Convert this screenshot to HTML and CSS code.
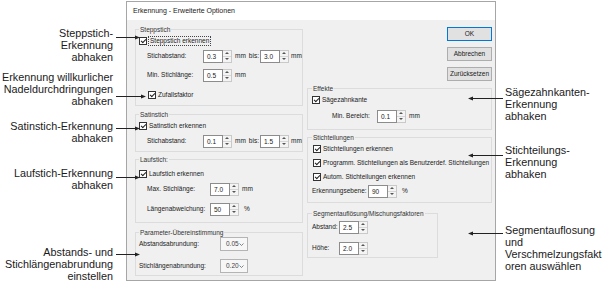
FILE: index.html
```html
<!DOCTYPE html>
<html lang="de">
<head>
    <meta charset="UTF-8">
    <meta name="viewport" content="width=device-width, initial-scale=1.0">
    <title>Erkennung - Erweiterte Optionen</title>
    <link rel="stylesheet" href="styles.css">
</head>
<body>
<div class="page">
    <div class="notes notes-left">
        <p class="note note-stepp">Steppstich-<br>Erkennung<br>abhaken</p>
        <p class="note note-zufall">Erkennung willkurlicher<br>Nadeldurchdringungen<br>abhaken</p>
        <p class="note note-satin">Satinstich-Erkennung<br>abhaken</p>
        <p class="note note-lauf">Laufstich-Erkennung<br>abhaken</p>
        <p class="note note-param">Abstands- und<br>Stichlängenabrundung<br>einstellen</p>
    </div>

    <div class="dialog">
        <div class="titlebar">Erkennung - Erweiterte Optionen</div>
        <div class="dialog-body">
            <div class="col col-left">
                <fieldset class="group group-stepp">
                    <legend>Steppstich</legend>
                    <div class="row"><span class="check"></span><span class="focus">Steppstich erkennen</span></div>
                    <div class="row sp1">
                        <span class="lbl">Stichabstand:</span>
                        <span class="spin"><span class="field">0.3</span><span class="arrows"><i class="up"></i><i class="down"></i></span></span>
                        <span class="unit">mm</span>
                        <span class="bis">bis:</span>
                        <span class="spin"><span class="field">3.0</span><span class="arrows"><i class="up"></i><i class="down"></i></span></span>
                        <span class="unit unit-end">mm</span>
                    </div>
                    <div class="row sp5">
                        <span class="lbl">Min. Stichlänge:</span>
                        <span class="spin"><span class="field">0.5</span><span class="arrows"><i class="up"></i><i class="down"></i></span></span>
                        <span class="unit">mm</span>
                    </div>
                    <div class="row sp6 indent"><span class="check"></span>Zufallsfaktor</div>
                </fieldset>

                <fieldset class="group group-satin">
                    <legend>Satinstich</legend>
                    <div class="row"><span class="check"></span>Satinstich erkennen</div>
                    <div class="row sp1">
                        <span class="lbl">Stichabstand:</span>
                        <span class="spin"><span class="field">0.1</span><span class="arrows"><i class="up"></i><i class="down"></i></span></span>
                        <span class="unit">mm</span>
                        <span class="bis">bis:</span>
                        <span class="spin"><span class="field">1.5</span><span class="arrows"><i class="up"></i><i class="down"></i></span></span>
                        <span class="unit unit-end">mm</span>
                    </div>
                </fieldset>

                <fieldset class="group group-lauf">
                    <legend>Laufstich:</legend>
                    <div class="row sp3"><span class="check"></span>Laufstich erkennen</div>
                    <div class="row sp1">
                        <span class="lbl">Max. Stichlänge:</span>
                        <span class="spin"><span class="field">7.0</span><span class="arrows"><i class="up"></i><i class="down"></i></span></span>
                        <span class="unit">mm</span>
                    </div>
                    <div class="row sp6">
                        <span class="lbl">Längenabweichung:</span>
                        <span class="spin"><span class="field">50</span><span class="arrows"><i class="up"></i><i class="down"></i></span></span>
                        <span class="unit unit-pct">%</span>
                    </div>
                </fieldset>

                <fieldset class="group group-param">
                    <legend>Parameter-Übereinstimmung</legend>
                    <div class="row">
                        <span class="lbl">Abstandsabrundung:</span>
                        <span class="combo">0.05<svg width="5" height="3" viewBox="0 0 5 3"><polyline points="0.5,0.5 2.5,2.5 4.5,0.5" fill="none" stroke="#666" stroke-width="0.8"/></svg></span>
                    </div>
                    <div class="row sp8">
                        <span class="lbl">Stichlängenabrundung:</span>
                        <span class="combo">0.20<svg width="5" height="3" viewBox="0 0 5 3"><polyline points="0.5,0.5 2.5,2.5 4.5,0.5" fill="none" stroke="#666" stroke-width="0.8"/></svg></span>
                    </div>
                </fieldset>
            </div>

            <div class="col col-right">
                <div class="buttons">
                    <span class="btn btn-default">OK</span>
                    <span class="btn">Abbrechen</span>
                    <span class="btn">Zurücksetzen</span>
                </div>

                <fieldset class="group group-effekte">
                    <legend>Effekte</legend>
                    <div class="row"><span class="check"></span>Sägezahnkante</div>
                    <div class="row sp2">
                        <span class="lbl">Min. Bereich:</span>
                        <span class="spin"><span class="field">0.1</span><span class="arrows"><i class="up"></i><i class="down"></i></span></span>
                        <span class="unit">mm</span>
                    </div>
                </fieldset>

                <fieldset class="group group-teil">
                    <legend>Stichteilungen</legend>
                    <div class="row"><span class="check"></span>Stichteilungen erkennen</div>
                    <div class="row"><span class="check"></span>Programm. Stichteilungen als Benutzerdef. Stichteilungen</div>
                    <div class="row"><span class="check"></span>Autom. Stichteilungen erkennen</div>
                    <div class="row">
                        <span class="lbl">Erkennungsebene:</span>
                        <span class="spin"><span class="field">90</span><span class="arrows"><i class="up"></i><i class="down"></i></span></span>
                        <span class="unit unit-pct">%</span>
                    </div>
                </fieldset>

                <fieldset class="group group-segment">
                    <legend>Segmentauflösung/Mischungsfaktoren</legend>
                    <div class="row sp2">
                        <span class="lbl">Abstand:</span>
                        <span class="spin"><span class="field">2.5</span><span class="arrows"><i class="up"></i><i class="down"></i></span></span>
                    </div>
                    <div class="row sp7">
                        <span class="lbl">Höhe:</span>
                        <span class="spin"><span class="field">2.0</span><span class="arrows"><i class="up"></i><i class="down"></i></span></span>
                    </div>
                </fieldset>
            </div>
        </div>
    </div>

    <div class="notes notes-right">
        <p class="note note-saege">Sägezahnkanten-<br>Erkennung<br>abhaken</p>
        <p class="note note-teil">Stichteilungs-<br>Erkennung<br>abhaken</p>
        <p class="note note-segment">Segmentauflosung<br>und<br>Verschmelzungsfakt<br>oren auswählen</p>
    </div>

    <!-- Hinweislinien -->
    <svg class="leaders" width="603" height="286" viewBox="0 0 603 286">
        <g stroke="#222" stroke-width="1">
            <line x1="116" y1="37.5" x2="136" y2="37.5"/>
            <line x1="116" y1="96.5" x2="142" y2="96.5"/>
            <line x1="116" y1="128.5" x2="136" y2="128.5"/>
            <line x1="116" y1="177.5" x2="136" y2="177.5"/>
            <line x1="116" y1="254.5" x2="136" y2="254.5"/>
            <line x1="503" y1="98.5" x2="472" y2="98.5"/>
            <line x1="503" y1="155.5" x2="472" y2="155.5"/>
            <line x1="503" y1="233.5" x2="472" y2="233.5"/>
        </g>
        <g fill="#222">
            <polygon points="135,35.5 140,37.5 135,39.5"/>
            <polygon points="141,94.5 146,96.5 141,98.5"/>
            <polygon points="135,126.5 140,128.5 135,130.5"/>
            <polygon points="135,175.5 140,177.5 135,179.5"/>
            <polygon points="135,252.5 140,254.5 135,256.5"/>
            <polygon points="473,96.5 468,98.5 473,100.5"/>
            <polygon points="473,153.5 468,155.5 473,157.5"/>
            <polygon points="473,231.5 468,233.5 473,235.5"/>
        </g>
    </svg>
</div>
</body>
</html>
```

FILE: styles.css
```css
html, body {
    margin: 0;
    padding: 0;
    height: 286px;
    overflow: hidden;
    background-color: #fff;
}
body {
    font-family: "Liberation Sans", Arial, sans-serif;
    color: #1a1a1a;
}
.page {
    position: relative;
    display: flex;
    width: 603px;
    height: 286px;
}

/* Beschriftungen links und rechts */
.notes {
    flex: none;
    font-size: 10.8px;
    line-height: 12px;
    white-space: nowrap;
    color: #1a1a1a;
}
.note {
    margin: 0;
}
.notes-left {
    width: 126px;
    box-sizing: border-box;
    padding-right: 13px;
    text-align: right;
}
.notes-right {
    flex: 1;
    padding-left: 9px;
}
.note-stepp { margin-top: 27px; }
.note-zufall { margin-top: 8px; }
.note-satin { margin-top: 13px; }
.note-lauf { margin-top: 23px; }
.note-param { margin-top: 55px; }
.note-saege { margin-top: 86px; }
.note-teil { margin-top: 22px; }
.note-segment { margin-top: 44px; }

.leaders {
    position: absolute;
    left: 0;
    top: 0;
    pointer-events: none;
}

/* Dialog */
.dialog {
    flex: none;
    width: 370px;
    height: 280px;
    margin-top: 1px;
    box-sizing: border-box;
    border: 1px solid #a6a6a6;
    display: flex;
    flex-direction: column;
    font-size: 6.5px;
    line-height: 8px;
    color: #1a1a1a;
}
.titlebar {
    height: 18px;
    background-color: #fff;
    font-size: 7px;
    line-height: 18px;
    padding-left: 6px;
}
.dialog-body {
    flex: 1;
    background-color: #f0f0f0;
    display: flex;
    gap: 4px;
    padding: 5px 3px 0 8px;
}
.col {
    display: flex;
    flex-direction: column;
}
.col-left {
    width: 168px;
}
.col-right {
    width: 185px;
    padding-top: 2px;
}

.group {
    margin: 0;
    padding: 0 0 3px 3px;
    border: 1px solid #dcdcdc;
    min-width: 0;
}
.group legend {
    padding: 0 1px;
    line-height: 9px;
    color: #333;
}
.group-satin { margin-top: 4px; }
.group-lauf { margin-top: 3px; padding-bottom: 6px; }
.group-param { margin-top: 5px; padding-bottom: 2px; }
.group-effekte { margin-top: 3px; padding-left: 4px; padding-bottom: 6px; }
.group-teil { margin-top: 3px; padding-left: 4px; padding-bottom: 4px; }
.group-segment { margin-top: 6px; padding-left: 4px; padding-bottom: 2px; width: 131px; box-sizing: border-box; }

.row {
    display: flex;
    align-items: center;
    height: 14px;
    white-space: nowrap;
}
.sp1 { margin-top: 1px; }
.sp2 { margin-top: 2px; }
.sp3 { margin-top: 3px; }
.sp5 { margin-top: 5px; }
.sp6 { margin-top: 6px; }
.sp7 { margin-top: 7px; }
.sp8 { margin-top: 8px; }
.indent { padding-left: 9px; }

.lbl {
    flex: none;
    box-sizing: border-box;
}
.group-stepp .lbl,
.group-satin .lbl {
    width: 64px;
    padding-left: 8px;
}
.group-lauf .lbl {
    width: 71px;
    padding-left: 8px;
}
.group-param .lbl {
    width: 81px;
}
.group-effekte .lbl {
    width: 65px;
    padding-left: 20px;
}
.group-teil .lbl {
    width: 56px;
}
.group-segment .lbl {
    width: 27px;
}

/* Kontrollkästchen */
.check {
    position: relative;
    flex: none;
    width: 8px;
    height: 8px;
    box-sizing: border-box;
    border: 1px solid #333;
    background-color: #fff;
    margin-right: 2px;
}
.check::after {
    content: "";
    position: absolute;
    left: 2px;
    top: 0;
    width: 2px;
    height: 4px;
    border: solid #222;
    border-width: 0 1px 1px 0;
    transform: rotate(45deg);
}
.group-teil .check {
    margin-left: 1px;
}
.focus {
    border: 1px dotted #444;
    padding: 0 1px;
    margin-left: -1px;
}

/* Drehfelder */
.spin {
    display: flex;
    flex: none;
}
.field {
    width: 20px;
    height: 13px;
    box-sizing: border-box;
    border: 1px solid #8c8c8c;
    background-color: #fff;
    padding-left: 3px;
    line-height: 11px;
}
.arrows {
    display: flex;
    flex-direction: column;
    width: 9px;
    height: 13px;
    box-sizing: border-box;
    border: 1px solid #c9c9c9;
    border-left: none;
    background-color: #f4f4f4;
}
.arrows i {
    flex: 1;
    display: flex;
    align-items: center;
    justify-content: center;
}
.arrows i::before {
    content: "";
    border-left: 2px solid transparent;
    border-right: 2px solid transparent;
}
.arrows .up {
    border-bottom: 1px solid #d6d6d6;
}
.arrows .up::before {
    border-bottom: 2px solid #555;
}
.arrows .down::before {
    border-top: 2px solid #555;
}
.unit {
    margin-left: 3px;
}
.unit-pct {
    margin-left: 5px;
}
.bis {
    margin-left: 3px;
    margin-right: 1px;
}
.unit-end {
    margin-left: 2px;
}

/* Auswahlfelder */
.combo {
    display: flex;
    align-items: center;
    justify-content: space-between;
    width: 28px;
    height: 14px;
    box-sizing: border-box;
    border: 1px solid #b4b4b4;
    background-color: #f7f7f7;
    padding: 0 3px 0 5px;
    color: #444;
}

/* Schaltflächen */
.buttons {
    display: flex;
    flex-direction: column;
    align-items: flex-end;
    gap: 6px;
}
.btn {
    width: 45px;
    height: 14px;
    box-sizing: border-box;
    border: 1px solid #adadad;
    background-color: #e1e1e1;
    text-align: center;
    line-height: 12px;
}
.btn-default {
    border-color: #0078d7;
}
```
